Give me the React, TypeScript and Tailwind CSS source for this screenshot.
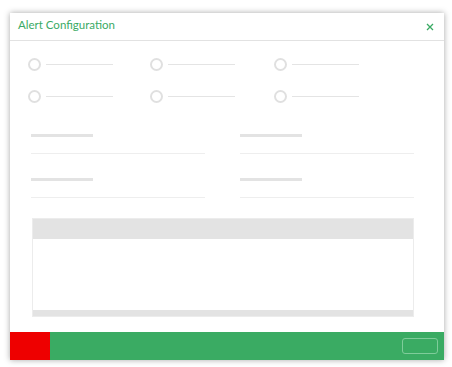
import React from 'react';

const Radio = () => (
  <div className="flex items-center">
    <span className="w-[13px] h-[13px] rounded-full border-2 border-[#e0e0e0] box-border"></span>
    <span className="ml-[5px] w-[67px] h-px bg-[#e4e4e4]"></span>
  </div>
);

const Field = () => (
  <div className="flex flex-col">
    <div className="w-[62px] h-[3px] bg-[#e3e3e3]"></div>
    <div className="mt-[16px] w-[174px] h-px bg-[#eeeeee]"></div>
  </div>
);

const App = () => {
  return (
    <div className="w-[452px] h-[367px] bg-white pt-[13px] pl-[10px]" style={{ fontFamily: 'Lato, "Open Sans", sans-serif' }}>
      <div className="w-[434px] h-[347px] bg-white flex flex-col shadow-[0_0_6px_rgba(0,0,0,0.35)]">
        {/* Header */}
        <div className="h-[28px] flex items-center justify-between pl-[8px] pr-[10px] border-b border-[#e2e2e2]">
          <span className="text-[11.5px] text-[#3aaa64] leading-none -mt-[4px]">Alert Configuration</span>
          <svg width="8" height="8" viewBox="0 0 8 8" className="mt-[1px]">
            <path d="M1 1 L7 7 M7 1 L1 7" stroke="#3aaa64" strokeWidth="1.3" />
          </svg>
        </div>

        {/* Radio options */}
        <div className="grid grid-cols-[122px_124px_122px] gap-y-[19px] pl-[18px] pt-[17px]">
          <Radio />
          <Radio />
          <Radio />
          <Radio />
          <Radio />
          <Radio />
        </div>

        {/* Fields */}
        <div className="grid grid-cols-[209px_174px] gap-y-[24px] pl-[21px] mt-[31px]">
          <Field />
          <Field />
          <Field />
          <Field />
        </div>

        {/* Table */}
        <div className="ml-[22px] mt-[20px] w-[382px] h-[99px] border border-[#ececec] flex flex-col">
          <div className="h-[20px] bg-[#e3e3e3]"></div>
          <div className="flex-1 bg-white"></div>
          <div className="h-[6px] bg-[#e3e3e3]"></div>
        </div>

        {/* Footer */}
        <div className="mt-auto h-[28px] flex bg-[#3aab63]">
          <div className="w-[40px] bg-[#ee0000]"></div>
          <div className="flex-1 flex items-center justify-end pr-[6px]">
            <div className="w-[36px] h-[16px] rounded-[3px] border border-[#7fcc9a]"></div>
          </div>
        </div>
      </div>
    </div>
  );
};

export default App;
